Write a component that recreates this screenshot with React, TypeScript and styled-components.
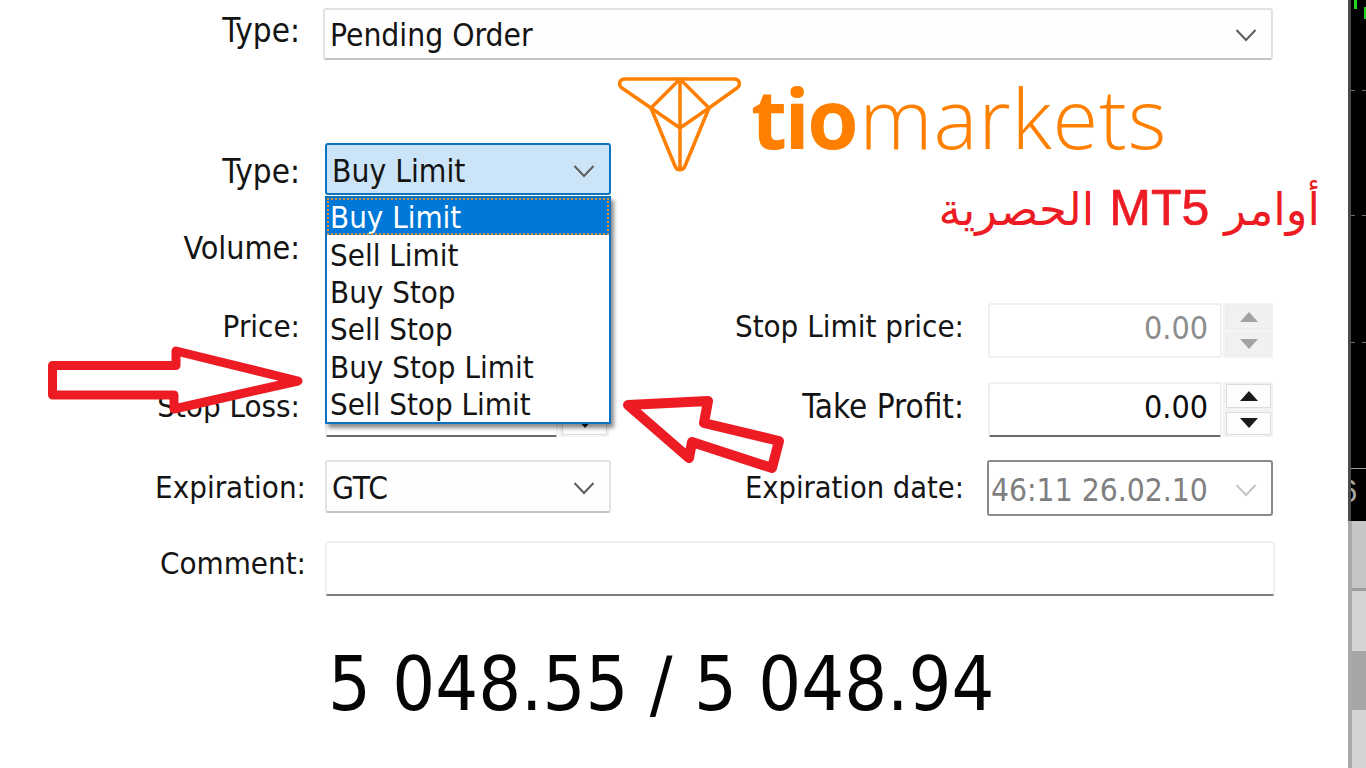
import styled, { createGlobalStyle } from "styled-components";

const GlobalStyle = createGlobalStyle`
  html, body {
    margin: 0;
    padding: 0;
    background: #fff;
    overflow: hidden;
  }
`;

const Page = styled.div`
  position: relative;
  display: flex;
  width: 1366px;
  height: 768px;
  overflow: hidden;
  background: #fff;
  color: #141414;
  font-family: "DejaVu Sans Condensed", "DejaVu Sans", sans-serif;
`;

const Form = styled.main`
  flex: 1;
  display: flex;
  flex-direction: column;
  padding-top: 8px;
`;

const Row = styled.div<{ $h: number; $gap: number }>`
  display: flex;
  align-items: stretch;
  height: ${(p) => p.$h}px;
  margin-top: ${(p) => p.$gap}px;
`;

// $up lifts the text inside its row, $down drops it
const Label = styled.label<{ $w: number; $up?: number; $down?: number; $size?: number }>`
  flex: none;
  width: ${(p) => p.$w}px;
  display: flex;
  align-items: center;
  justify-content: flex-end;
  font-size: ${(p) => p.$size ?? 31}px;
  line-height: 1;
  padding-bottom: ${(p) => p.$up ?? 0}px;
  padding-top: ${(p) => p.$down ?? 0}px;
  box-sizing: border-box;
  white-space: nowrap;
`;

const Field = styled.div<{ $w: number; $left: number }>`
  flex: none;
  box-sizing: border-box;
  width: ${(p) => p.$w}px;
  margin-left: ${(p) => p.$left}px;
  display: flex;
  align-items: center;
  justify-content: space-between;
  padding: 2px 14px 0 5px;
  font-size: 31.5px;
  background: #fefefe;
  border: 2px solid #e2e2e2;
  border-bottom-color: #c4c4c4;
  border-radius: 3px;
  white-space: nowrap;
`;

const FocusedField = styled(Field)`
  background: #cce4f7;
  border-color: #0a73c4;
  padding-top: 4px;
`;

const DisabledField = styled(Field)`
  color: #7f7f7f;
  background: #fff;
  border-color: #8a8a8a;
  padding-left: 2px;
  padding-top: 3px;
  margin-bottom: -3px;
`;

const CommentField = styled(Field)`
  background: #fff;
  border-color: #efefef;
  border-bottom-color: #7c7c7c;
`;

const NumberBox = styled.div<{ $disabled?: boolean; $left: number; $w: number }>`
  flex: none;
  box-sizing: border-box;
  width: ${(p) => p.$w}px;
  margin-left: ${(p) => p.$left}px;
  display: flex;
  align-items: center;
  justify-content: flex-end;
  padding: 0 12px 6px 0;
  font-size: 32px;
  color: ${(p) => (p.$disabled ? "#8c8c8c" : "#0c0c0c")};
  border: 2px solid #efefef;
  border-bottom-color: ${(p) => (p.$disabled ? "#efefef" : "#6b6b6b")};
  border-radius: 3px;
`;

const Spinner = styled.div`
  flex: none;
  width: 50px;
  box-sizing: border-box;
  margin-left: 1px;
  padding: 2px 2px 2px 3px;
  display: flex;
  flex-direction: column;
  gap: 4px;
  background: #f3f3f3;
`;

const SpinButton = styled.div<{ $disabled?: boolean }>`
  flex: 1;
  display: flex;
  align-items: center;
  justify-content: center;
  color: ${(p) => (p.$disabled ? "#a3a3a3" : "#1a1a1a")};
  background: ${(p) => (p.$disabled ? "#f1f1f1" : "#fdfdfd")};
  border: 1px solid ${(p) => (p.$disabled ? "#ececec" : "#dcdcdc")};
`;

const Quote = styled.div`
  margin: 43px 0 0 328px;
  font-size: 75px;
  line-height: 90px;
  color: #050505;
  white-space: nowrap;
`;

const Dropdown = styled.ul`
  position: absolute;
  left: 325px;
  top: 196px;
  width: 286px;
  height: 228px;
  box-sizing: border-box;
  margin: 0;
  padding: 0;
  list-style: none;
  background: #fff;
  border: 2px solid #0a73c4;
  box-shadow: 3px 4px 4px rgba(0, 0, 0, 0.45);
`;

const Option = styled.li<{ $active?: boolean }>`
  height: 37.4px;
  padding: 2px 0 0 3px;
  display: flex;
  align-items: center;
  box-sizing: border-box;
  font-size: 31px;
  line-height: 1;
  white-space: nowrap;
  color: ${(p) => (p.$active ? "#fff" : "#141414")};
  background: ${(p) => (p.$active ? "#0078d7" : "transparent")};
  outline: ${(p) => (p.$active ? "2px dotted #d9903a" : "none")};
  outline-offset: -2px;
`;

const LogoBlock = styled.div`
  position: absolute;
  left: 610px;
  top: 70px;
  display: flex;
  align-items: flex-start;
`;

const LogoMark = styled.svg`
  width: 140px;
  height: 110px;
  flex: none;
`;

const Wordmark = styled.div`
  margin: -8px 0 0 1px;
  font-family: "Open Sans", sans-serif;
  font-size: 83px;
  font-weight: 300;
  line-height: 110px;
  letter-spacing: 0.9px;
  color: #ff8000;
  white-space: nowrap;
`;

const WordBold = styled.span`
  font-weight: 700;
  letter-spacing: -2.5px;
  margin-right: 3px;
`;

const Tagline = styled.div`
  position: absolute;
  right: 46px;
  top: 178px;
  display: flex;
  flex-direction: row-reverse;
  align-items: baseline;
  gap: 15px;
  font-family: "Liberation Sans", "DejaVu Sans", sans-serif;
  font-size: 45px;
  line-height: 60px;
  color: #ed1c24;
  white-space: nowrap;
`;

const TagLatin = styled.span`
  font-size: 50px;
  -webkit-text-stroke: 0.7px #ed1c24;
`;

const ArrowLayer = styled.svg`
  position: absolute;
  left: 0;
  top: 0;
  width: 1366px;
  height: 768px;
  pointer-events: none;
`;

const ChartStrip = styled.aside`
  flex: none;
  width: 18px;
  display: flex;
  flex-direction: column;
`;

const ChartBlack = styled.div`
  position: relative;
  height: 521px;
  box-sizing: border-box;
  background: #000;
  border-left: 3px solid #4a4a4a;
  overflow: hidden;
`;

const Tick = styled.i<{ $y: number }>`
  position: absolute;
  left: 0;
  right: 0;
  top: ${(p) => p.$y}px;
  height: 1px;
  background: linear-gradient(90deg, #6a7078 0 4px, transparent 4px 11px, #6a7078 11px);
`;

const Candle = styled.i<{ $x: number; $y: number; $h: number; $w: number }>`
  position: absolute;
  left: ${(p) => p.$x}px;
  top: ${(p) => p.$y}px;
  width: ${(p) => p.$w}px;
  height: ${(p) => p.$h}px;
  background: #22d322;
`;

const AxisLine = styled.i`
  position: absolute;
  left: 0;
  right: 0;
  top: 468px;
  height: 1px;
  background: #9a9a9a;
`;

const AxisDigit = styled.span`
  position: absolute;
  left: -11px;
  top: 474px;
  font-family: "Liberation Sans", sans-serif;
  font-size: 31px;
  line-height: 36px;
  color: #a8a8a8;
`;

const GreyBand = styled.div<{ $h: number; $c: string }>`
  height: ${(p) => p.$h}px;
  box-sizing: border-box;
  background: ${(p) => p.$c};
  border-left: 4px solid #a9a9a9;
`;

function Chevron({ color = "#5c5c5c" }: { color?: string }) {
  return (
    <svg width="22" height="14" viewBox="0 0 22 14" fill="none">
      <path d="M1.5 2 11 12 20.5 2" stroke={color} strokeWidth="2" />
    </svg>
  );
}

function Triangle({ down }: { down?: boolean }) {
  return (
    <svg width="20" height="12" viewBox="0 0 20 12" fill="currentColor">
      <path d={down ? "M1 1H19L10 11Z" : "M10 1 19 11H1Z"} />
    </svg>
  );
}

const options = ["Buy Limit", "Sell Limit", "Buy Stop", "Sell Stop", "Buy Stop Limit", "Sell Stop Limit"];

export default function App() {
  return (
    <Page>
      <GlobalStyle />
      <Form>
        <Row $h={52} $gap={0}>
          <Label $w={300} $up={8} $size={33}>Type:</Label>
          <Field $w={950} $left={23}>
            Pending Order
            <Chevron />
          </Field>
        </Row>
        <Row $h={52} $gap={83}>
          <Label $w={300} $down={4} $size={33}>Type:</Label>
          <FocusedField $w={286} $left={25}>
            Buy Limit
            <Chevron />
          </FocusedField>
        </Row>
        <Row $h={55} $gap={25}>
          <Label $w={300} $size={32}>Volume:</Label>
          <NumberBox $w={233} $left={25} />
          <Spinner>
            <SpinButton><Triangle /></SpinButton>
            <SpinButton><Triangle down /></SpinButton>
          </Spinner>
        </Row>
        <Row $h={55} $gap={28}>
          <Label $w={300} $up={8}>Price:</Label>
          <NumberBox $w={233} $left={25} />
          <Spinner>
            <SpinButton><Triangle /></SpinButton>
            <SpinButton><Triangle down /></SpinButton>
          </Spinner>
          <Label $w={355} $up={8}>Stop Limit price:</Label>
          <NumberBox $disabled $w={234} $left={24}>0.00</NumberBox>
          <Spinner>
            <SpinButton $disabled><Triangle /></SpinButton>
            <SpinButton $disabled><Triangle down /></SpinButton>
          </Spinner>
        </Row>
        <Row $h={55} $gap={24}>
          <Label $w={300} $up={6}>Stop Loss:</Label>
          <NumberBox $w={233} $left={25} />
          <Spinner>
            <SpinButton><Triangle /></SpinButton>
            <SpinButton><Triangle down /></SpinButton>
          </Spinner>
          <Label $w={355} $up={6} $size={33}>Take Profit:</Label>
          <NumberBox $w={234} $left={24}>0.00</NumberBox>
          <Spinner>
            <SpinButton><Triangle /></SpinButton>
            <SpinButton><Triangle down /></SpinButton>
          </Spinner>
        </Row>
        <Row $h={53} $gap={23}>
          <Label $w={306} $down={2}>Expiration:</Label>
          <Field $w={286} $left={19}>
            GTC
            <Chevron />
          </Field>
          <Label $w={353} $down={4} $size={30.5}>Expiration date:</Label>
          <DisabledField $w={286} $left={23}>
            46:11 26.02.10
            <Chevron color="#c4c4c4" />
          </DisabledField>
        </Row>
        <Row $h={55} $gap={28}>
          <Label $w={306} $up={10}>Comment:</Label>
          <CommentField $w={950} $left={19} />
        </Row>
        <Quote>5 048.55 / 5 048.94</Quote>
      </Form>

      <ChartStrip>
        <ChartBlack>
          <Candle $x={3} $y={0} $w={3} $h={9} />
          <Candle $x={13} $y={7} $w={2} $h={12} />
          <Tick $y={90} />
          <Tick $y={215} />
          <Tick $y={342} />
          <AxisLine />
          <AxisDigit>6</AxisDigit>
        </ChartBlack>
        <GreyBand $h={67} $c="#c6c6c6" />
        <GreyBand $h={3} $c="#9e9e9e" />
        <GreyBand $h={60} $c="#d4d4d4" />
        <GreyBand $h={59} $c="#a6a6a6" />
        <GreyBand $h={58} $c="#d4d4d4" />
      </ChartStrip>

      <Dropdown>
        {options.map((o, i) => (
          <Option key={o} $active={i === 0}>{o}</Option>
        ))}
      </Dropdown>

      <LogoBlock>
        <LogoMark viewBox="610 70 140 110" fill="none" stroke="#ff8000" strokeWidth="3.5" strokeLinejoin="round">
          <path d="M625 79H734C740 79 741 85 737 88L709 108 685 166C683 171 677 171 675 166L651 108 622 88C618 85 619 79 625 79Z" />
          <path d="M680 79V170M680 79 651 108 680 128 709 108Z" />
        </LogoMark>
        <Wordmark>
          <WordBold>tio</WordBold>markets
        </Wordmark>
      </LogoBlock>

      <Tagline>
        <span>أوامر</span>
        <TagLatin>MT5</TagLatin>
        <span>الحصرية</span>
      </Tagline>

      <ArrowLayer viewBox="0 0 1366 768">
        <path d="M52.5 365.5H176V351L298 381 174 409V395H52.5Z" fill="#fff" stroke="#ed1c24" strokeWidth="9" strokeLinejoin="round" />
        <path d="M628 405 708 401 704 423 779 441 772 468 692 442 689 458Z" fill="#fff" stroke="#ed1c24" strokeWidth="10" strokeLinejoin="round" />
      </ArrowLayer>
    </Page>
  );
}
